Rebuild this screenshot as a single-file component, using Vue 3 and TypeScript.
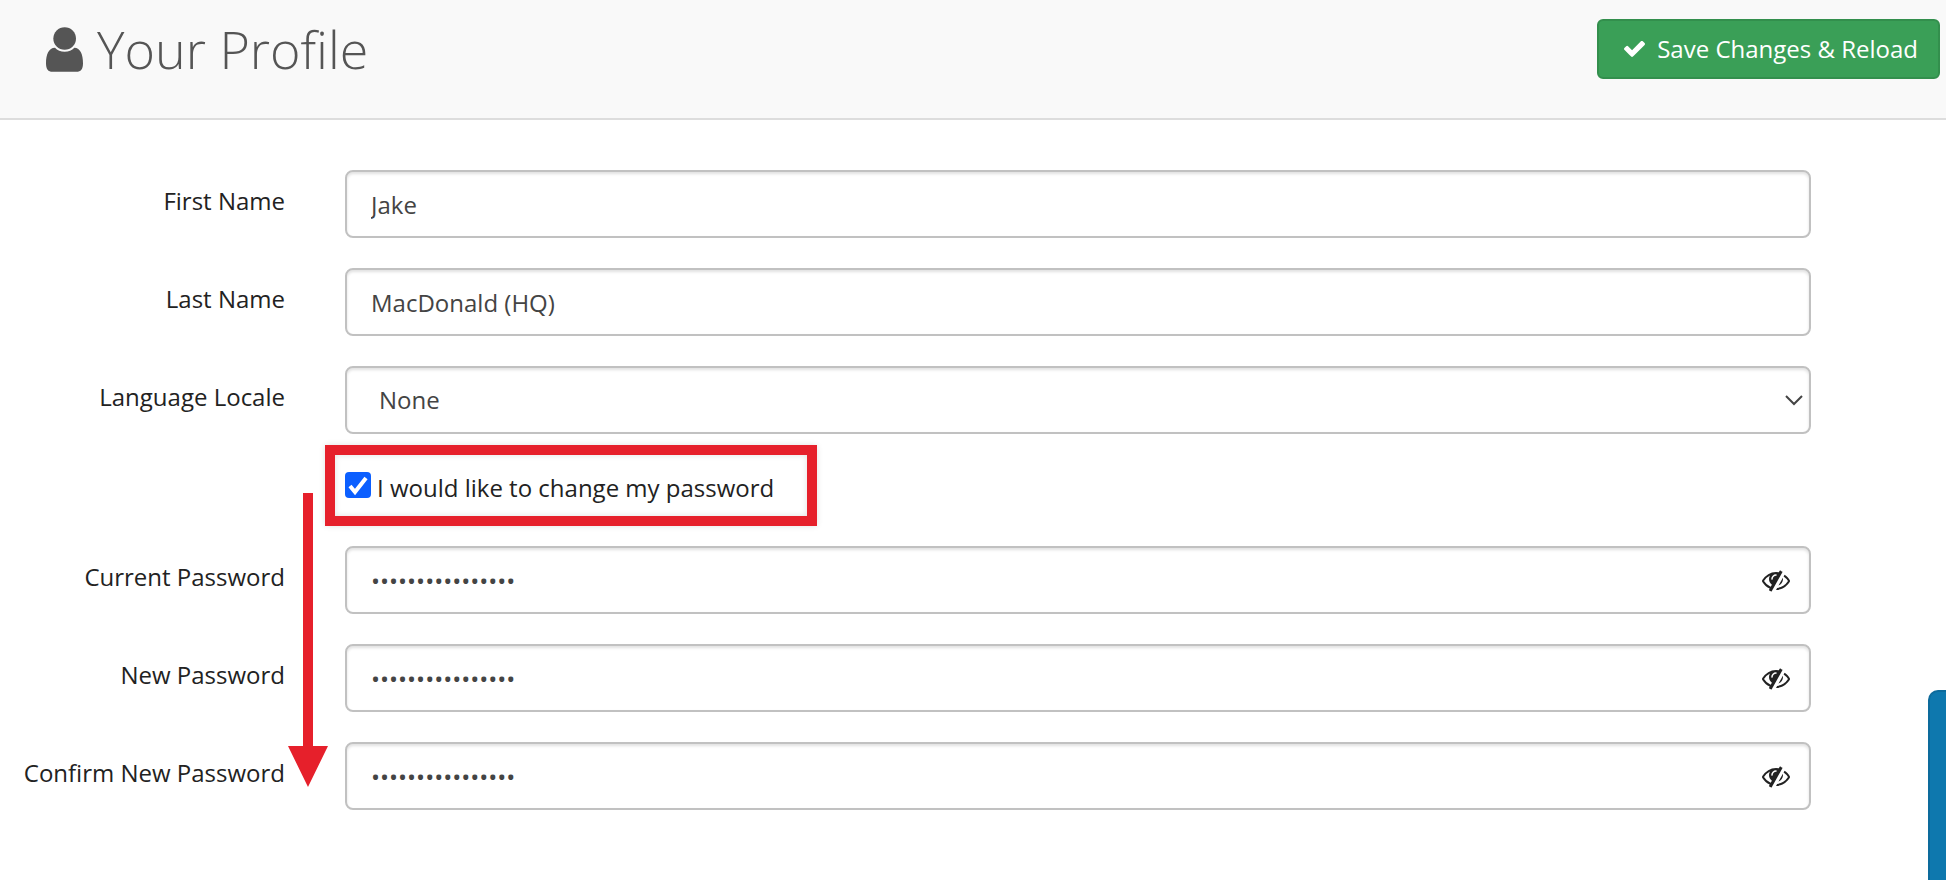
<script setup lang="ts">
import { reactive, ref } from 'vue'

type PasswordKey = 'current' | 'next' | 'confirm'

const profile = reactive({
  firstName: 'Jake',
  lastName: 'MacDonald (HQ)',
  locale: 'None',
})

const changePassword = ref(true)

const passwordFields = reactive<{ key: PasswordKey; label: string; value: string; visible: boolean }[]>([
  { key: 'current', label: 'Current Password', value: 'abcdefgh12345678', visible: false },
  { key: 'next', label: 'New Password', value: 'abcdefgh12345678', visible: false },
  { key: 'confirm', label: 'Confirm New Password', value: 'abcdefgh12345678', visible: false },
])
</script>

<template>
  <div class="page">
    <header class="header">
      <h1 class="title">
        <svg class="user-icon" viewBox="0 0 111 134" aria-hidden="true">
          <circle cx="56" cy="34" r="34" />
          <path d="M27 62C34 70 44 74 56 74S78 70 85 62C103 62 111 83 111 108C111 125 105 134 91 134H20C6 134 0 125 0 108C0 83 8 62 27 62Z" />
        </svg>
        <span>Your Profile</span>
      </h1>
      <button type="button" class="save">
        <svg class="check-icon" viewBox="121 342 1550 1180" aria-hidden="true">
          <path d="M1671 566q0 40-28 68l-724 724-136 136q-28 28-68 28t-68-28l-136-136-362-362q-28-28-28-68t28-68l136-136q28-28 68-28t68 28l294 295 656-657q28-28 68-28t68 28l136 136q28 28 28 68z" />
        </svg>
        <span>Save Changes &amp; Reload</span>
      </button>
    </header>

    <form class="form" @submit.prevent>
      <div class="row">
        <label class="label" for="first-name">First Name</label>
        <input id="first-name" v-model="profile.firstName" class="control" type="text" />
      </div>
      <div class="row">
        <label class="label" for="last-name">Last Name</label>
        <input id="last-name" v-model="profile.lastName" class="control" type="text" />
      </div>
      <div class="row">
        <label class="label" for="locale">Language Locale</label>
        <div class="field">
          <select id="locale" v-model="profile.locale" class="control select">
            <option>None</option>
          </select>
          <svg class="chevron" viewBox="0 0 18 11" aria-hidden="true">
            <path d="M1 1L9 9L17 1" />
          </svg>
        </div>
      </div>

      <div class="row">
        <div class="toggle">
          <input id="change-password" v-model="changePassword" class="checkbox" type="checkbox" />
          <svg v-if="changePassword" class="tick" viewBox="0 0 26 26" aria-hidden="true">
            <path d="M5 14L10 20L21 6" />
          </svg>
          <label for="change-password">I would like to change my password</label>
          <div class="highlight"></div>
        </div>
        <svg class="arrow" viewBox="0 0 40 294" aria-hidden="true">
          <path d="M15 0H25V253H40L20 294L0 253H15Z" />
        </svg>
      </div>

      <div v-for="field in passwordFields" :key="field.key" class="row">
        <label class="label" :for="field.key">{{ field.label }}</label>
        <div class="field">
          <input
            :id="field.key"
            v-model="field.value"
            class="control password"
            :type="field.visible ? 'text' : 'password'"
          />
          <button
            type="button"
            class="reveal"
            :aria-label="'Show ' + field.label"
            @click="field.visible = !field.visible"
          >
            <svg viewBox="0 0 1792 1792" aria-hidden="true">
              <path d="M555 1335l78-141q-87-63-136-159t-49-203q0-121 61-225-229 117-381 353 167 258 427 375zm389-759q0-20-14-34t-34-14q-125 0-214.500 89.500t-89.500 214.500q0 20 14 34t34 14 34-14 14-34q0-86 61-147t147-61q20 0 34-14t14-34zm363-191q0 7-1 9-106 189-316 567t-315 566l-49 89q-10 16-28 16-12 0-134-70-16-10-16-28 0-12 44-87-143-65-263.500-173t-208.500-245q-20-31-20-69t20-69q153-235 380-371t496-136q89 0 180 17l54-97q10-16 28-16 5 0 18 6t31 15.500 33 18.500 31.500 18.500 19.500 11.500q16 10 16 27zm37 447q0 139-79 253.500t-209 164.500l280-502q8 45 8 84zm448 128q0 35-20 69-39 64-109 145-150 172-347.500 267t-419.500 95l74-132q212-18 392.500-137t301.500-307q-115-179-282-294l63-112q95 64 182.500 153t144.500 184q20 34 20 69z" />
            </svg>
          </button>
        </div>
      </div>
    </form>

    <button type="button" class="side-tab" aria-label="Help"></button>
  </div>
</template>

<style>
body {
  margin: 0;
  background: #fff;
}
</style>

<style scoped>
.page {
  min-height: 100vh;
  color: #222;
  font-family: 'Open Sans', 'Noto Sans', sans-serif;
  font-size: 24px;
  line-height: 32px;
}

.header {
  display: flex;
  align-items: flex-start;
  justify-content: space-between;
  box-sizing: border-box;
  min-height: 120px;
  padding: 19px 6px 0 46px;
  border-bottom: 2px solid #ddd;
  background: #f9f9f9;
}

.title {
  display: flex;
  align-items: center;
  gap: 14px;
  margin: 0;
  color: #555;
  font-size: 52px;
  font-weight: 300;
  line-height: 60px;
}

.user-icon {
  width: 37px;
  height: 45px;
  fill: #555;
}

.save {
  display: flex;
  align-items: center;
  gap: 12px;
  box-sizing: border-box;
  height: 60px;
  padding: 0 20px 0 25px;
  border: 2px solid #338f4d;
  border-radius: 6px;
  background: #3a9f57;
  color: #fff;
  font: inherit;
}

.check-icon {
  width: 21px;
  height: 16px;
  fill: #fff;
}

.form {
  display: flex;
  flex-direction: column;
  gap: 30px;
  padding: 50px 135px 40px 0;
}

.row {
  position: relative;
  display: grid;
  grid-template-columns: 285px minmax(0, 1fr);
  column-gap: 60px;
}

.label {
  padding-top: 15px;
  text-align: right;
  white-space: nowrap;
}

.field {
  position: relative;
}

.control {
  display: block;
  box-sizing: border-box;
  width: 100%;
  height: 68px;
  margin: 0;
  padding: 0 24px;
  border: 2px solid #c1c1c1;
  border-radius: 8px;
  outline: 0;
  background: #fff;
  box-shadow: inset 0 2px 3px rgba(0, 0, 0, 0.12);
  color: #444;
  font: inherit;
}

.select {
  padding-left: 32px;
  appearance: none;
}

.password {
  padding-right: 70px;
}

.chevron {
  position: absolute;
  top: 29px;
  right: 8px;
  width: 18px;
  height: 11px;
  fill: none;
  stroke: #444;
  stroke-width: 2;
  pointer-events: none;
}

.reveal {
  position: absolute;
  top: 20px;
  right: 21px;
  width: 28px;
  height: 28px;
  padding: 0;
  border: 0;
  background: none;
}

.reveal svg {
  display: block;
  width: 28px;
  height: 28px;
  fill: #222;
}

.toggle {
  position: relative;
  grid-column: 2;
  justify-self: start;
  display: flex;
  align-items: flex-start;
  gap: 6px;
  box-sizing: border-box;
  height: 52px;
  padding-top: 8px;
}

.checkbox {
  width: 26px;
  height: 26px;
  margin: 0;
  border-radius: 4px;
  background: #0b5fff;
  appearance: none;
}

.tick {
  position: absolute;
  top: 8px;
  left: 0;
  width: 26px;
  height: 26px;
  fill: none;
  stroke: #fff;
  stroke-width: 4;
  pointer-events: none;
}

.highlight {
  position: absolute;
  top: -19px;
  right: -43px;
  bottom: -10px;
  left: -20px;
  border: 10px solid #e6202b;
  box-shadow: 0 0 6px rgba(0, 0, 0, 0.12), inset 0 0 6px rgba(0, 0, 0, 0.12);
  pointer-events: none;
}

.arrow {
  position: absolute;
  z-index: 1;
  top: 29px;
  left: 288px;
  width: 40px;
  height: 294px;
  fill: #e6202b;
  pointer-events: none;
}

.side-tab {
  position: fixed;
  right: 0;
  bottom: 0;
  width: 18px;
  height: 190px;
  padding: 0;
  border: 2px solid #0d6b9c;
  border-width: 2px 0 0 2px;
  border-radius: 10px 0 0 0;
  background: #0e78ae;
}
</style>
